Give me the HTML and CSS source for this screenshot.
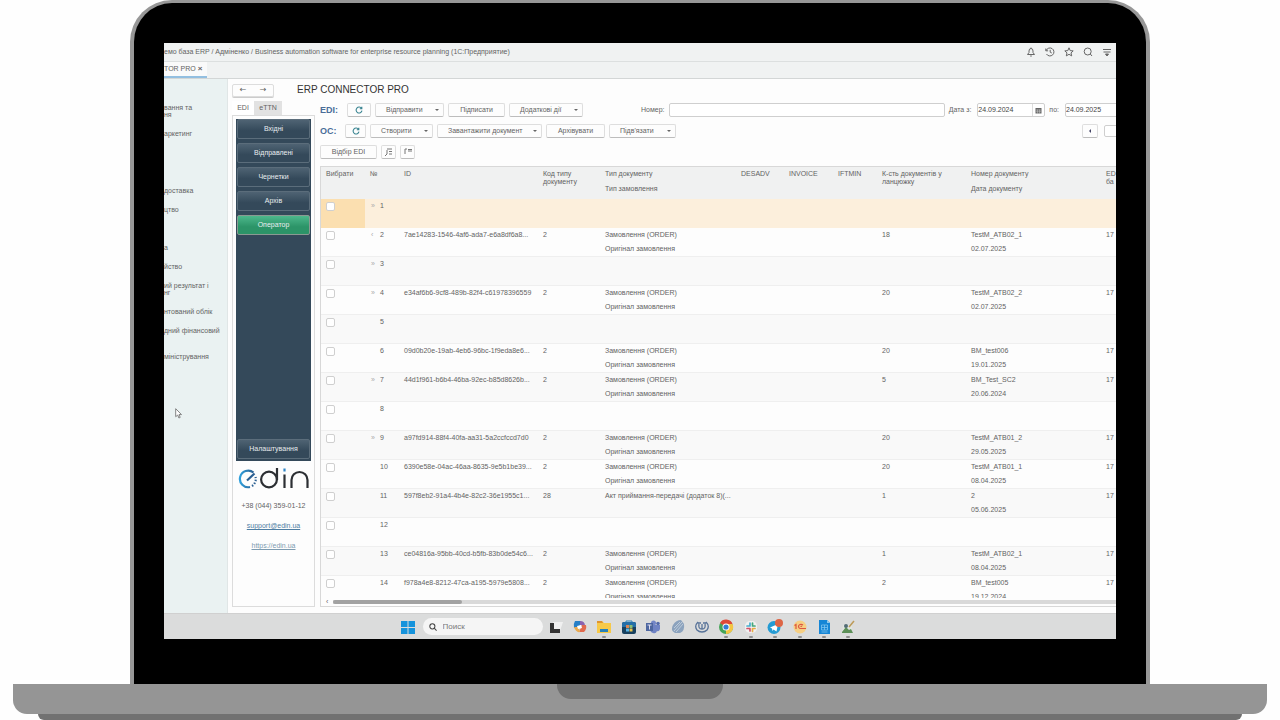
FILE: index.html
```
<!DOCTYPE html>
<html lang="uk">
<head>
<meta charset="utf-8">
<title>ERP CONNECTOR PRO</title>
<link rel="stylesheet" href="styles.css">
</head>
<body>
<div class="lid">
<div class="screen">
  <header class="titlebar">
    <span>емо база ERP / Адміненко / Business automation software for enterprise resource planning (1С:Предприятие)</span>
    <div class="title-icons">
      <button aria-label="Сповіщення"><svg viewBox="0 0 10 10"><path d="M1.500 7.500 3 5.500V4a2 2.500 0 0 1 4 0v1.500l1.500 2zM5 .6v1M4.200 9h1.600"/></svg></button>
      <button aria-label="Історія"><svg viewBox="0 0 10 10"><path d="M1.200 3.500A4 4 0 1 1 1.500 7M.8 1.500v2.300h2.300M5.200 2.800V5.200L6.800 6"/></svg></button>
      <button aria-label="Обране"><svg viewBox="0 0 10 10"><path d="m5 .8 1.200 2.800 3 .3L7 5.900l.7 3L5 7.300 2.300 8.900l.7-3L.8 3.900l3-.3z"/></svg></button>
      <button aria-label="Пошук"><svg viewBox="0 0 10 10"><circle cx="4.700" cy="4.500" r="3.500"/><path d="M7.300 7 9 9"/></svg></button>
      <button aria-label="Меню"><svg viewBox="0 0 10 10"><path d="M1 2.500h8M1.500 5h7"/><path d="M3.500 7h3L5 9z" fill="#666"/></svg></button>
    </div>
  </header>
  <div class="tabbar"><button class="doc-tab">TOR PRO <b>×</b></button></div>

  <div class="workspace">
    <nav class="sections">
      <ul>
        <li>вання та<br>ня</li><li>аркетинг</li><li></li><li></li><li>доставка</li><li>цтво</li><li></li><li>а</li><li>йство</li><li>ий результат і<br>нг</li><li>нтований облік</li><li class="two-line">дний фінансовий</li><li>міністрування</li>
      </ul>
      <svg class="pointer" viewBox="0 0 7 11"><path d="M.7.7v8l2-1.700 1.200 3 1.300-.6-1.200-2.800h2.500z" fill="#fff" stroke="#777" stroke-width=".9"/></svg>
    </nav>

    <main class="main">
      <div class="heading">
        <div class="history"><button aria-label="Назад">←</button><button aria-label="Вперед">→</button></div>
        <h1>ERP CONNECTOR PRO</h1>
      </div>
      <div class="columns">
        <aside class="side">
          <div class="side-tabs"><button class="on">EDI</button><button>eTTN</button></div>
          <div class="side-panel">
            <div class="menu">
              <button>Вхідні</button><button>Відправлені</button><button>Чернетки</button><button>Архів</button><button class="active">Оператор</button>
              <button class="last">Налаштування</button>
            </div>
            <svg class="logo" viewBox="0 0 72 24" role="img" aria-label="edin">
              <defs><linearGradient id="lg" x1="0" x2="1"><stop offset="0" stop-color="#2f9fdb"/><stop offset="1" stop-color="#2a5f92"/></linearGradient></defs>
              <g fill="none" stroke="#2c2f33" stroke-width="2.200">
                <path d="M15.500 6.500A8.300 8.300 0 1 0 12 21" stroke="url(#lg)"/>
                <path d="M9 14.500 16.500 7.500" stroke="#2a5f92"/>
                <path d="M14 20a8.300 8.300 0 0 0 3.500-9" stroke="#2a5f92" stroke-dasharray="1.500 1.500"/>
                <circle cx="31" cy="13.500" r="7.900"/><path d="M39 2v12M46.500 8.500V22M53.500 22v-8a8 8 0 0 1 16 0v8"/>
                <path d="M46.500 2.500v3" stroke="#2f86c8"/>
              </g>
            </svg>
            <p>+38 (044) 359-01-12</p>
            <p><a href="#mail">support@edin.ua</a></p>
            <p><a class="pale" href="#site">https://edin.ua</a></p>
          </div>
        </aside>

        <section class="content">
          <div class="bar">
            <strong class="w-tag">EDI:</strong>
            <button class="btn w-sm" aria-label="Оновити EDI"><svg class="ref" viewBox="0 0 10 10"><path d="M8.200 3A3.700 3.700 0 1 0 8.700 5.800M8.500 1v2.500H6"/></svg></button>
            <button class="btn drop w-69">Відправити</button>
            <button class="btn w-56">Підписати</button>
            <button class="btn drop w-74">Додаткові дії</button>
            <label class="number" for="num">Номер:</label><input id="num" class="grow" type="text">
            <label class="range" for="from">Дата з:</label>
            <span class="date"><input id="from" type="text" value="24.09.2024"><button aria-label="Календар"><svg viewBox="0 0 7 7"><path d="M.5 1h6v5.500h-6z" fill="#666"/><path d="M1 3h5M1 4.700h5M2.500 2.500v4M4.500 2.500v4" stroke="#ddd" stroke-width=".4"/></svg></button></span>
            <label class="range" for="to">по:</label>
            <span class="date cut"><input id="to" type="text" value="24.09.2025"></span>
          </div>
          <div class="bar">
            <strong class="w-tag2">ОС:</strong>
            <button class="btn w-20" aria-label="Оновити ОС"><svg class="ref" viewBox="0 0 10 10"><path d="M8.200 3A3.700 3.700 0 1 0 8.700 5.800M8.500 1v2.500H6"/></svg></button>
            <button class="btn drop w-63">Створити</button>
            <button class="btn drop w-105">Завантажити документ</button>
            <button class="btn w-59">Архівувати</button>
            <button class="btn drop w-67">Підв'язати</button>
            <button class="btn page-btn" aria-label="Попередня"><i></i></button>
            <input class="tail" type="text" aria-label="Сторінка">
          </div>
          <div class="bar">
            <button class="btn w-57">Відбір EDI</button>
            <button class="btn w-14" aria-label="Розгорнути"><svg viewBox="0 0 10 10"><path d="M3 2h5M5 4.500h3M5 7h3M1 9l2-2V3" /></svg></button>
            <button class="btn w-14" aria-label="Згорнути"><svg viewBox="0 0 10 10"><path d="M2 7V2h2M5 2.500h4M5 4h4" /></svg></button>
          </div>

          <div class="grid">
            <div class="rows">
              <table>
                <colgroup><col class="c1"><col class="c2"><col class="c3"><col class="c4"><col class="c5"><col class="c6"><col class="c7"><col class="c8"><col class="c9"><col class="c10"><col></colgroup>
                <thead><tr><th>Вибрати</th><th>№</th><th>ID</th><th>Код типу<br>документу</th><th>Тип документу<span>Тип замовлення</span></th><th>DESADV</th><th>INVOICE</th><th>IFTMIN</th><th>К-сть документів у<br>ланцюжку</th><th>Номер документу<span>Дата документу</span></th><th>ED<br>ба</th></tr></thead>
                <tbody id="rows"></tbody>
              </table>
            </div>
            <div class="scroll"><span>‹</span><div class="track"><div class="thumb"></div></div></div>
          </div>
        </section>
      </div>
    </main>
  </div>

  <footer class="taskbar">
    <button aria-label="Пуск"><svg viewBox="0 0 16 16"><path d="M1 2h6.500v6H1zM8.500 2H15v6H8.500zM1 9h6.500v6H1zM8.500 9H15v6H8.500z" fill="#1593dc"/></svg></button>
    <label class="search"><svg viewBox="0 0 10 10"><circle cx="4.200" cy="4.200" r="3.200"/><path d="m6.500 6.500 3 3"/></svg><input type="text" placeholder="Поиск" aria-label="Поиск"></label>
    <div class="apps">
    <button aria-label="Вікна"><svg viewBox="0 0 16 16"><path d="M5 3h10l-3 9H5z" fill="#f0f0f0"/><path d="M2 4h4v6h6v4H2z" fill="#333"/></svg></button>
    <button aria-label="Copilot"><svg viewBox="0 0 16 16"><path d="M3 2h6l-2 7H2Q1 5 3 2z" fill="#267fc7"/><path d="M8 2q5 0 5 5L8 6z" fill="#8a63b0"/><path d="M10 6h4q1 4-2 7H7z" fill="#e16a4e"/><path d="M2 8h5l1 5q-4 1-6-5z" fill="#e9a94e"/><path d="m5 7 4-1 1 3-4 1z" fill="#fff"/></svg></button>
    <button class="run" aria-label="Провідник"><svg viewBox="0 0 16 16"><path d="M1 2h5l2 2h7v10H1z" fill="#f7c948"/><path d="M1 2h5l1 2H1z" fill="#df932d"/><path d="M4 10h8v3H4z" fill="#2681b9"/></svg></button>
    <button aria-label="Магазин"><svg viewBox="0 0 16 16"><path d="M5 4V2h6v2" fill="none" stroke="#2b82b9"/><rect x="1" y="3" width="14" height="12" rx="2" fill="#17405f"/><path d="M1 5q0-2 2-2h10q2 0 2 2v3H1z" fill="#246fa8"/><path d="M5 6h3v3H5z" fill="#d98555"/><path d="M8.500 6h3v3h-3z" fill="#8abf74"/><path d="M5 9.500h3v3H5z" fill="#57b5e8"/><path d="M8.500 9.500h3v3h-3z" fill="#edc54d"/></svg></button>
    <button aria-label="Teams"><svg viewBox="0 0 16 16"><circle cx="8.500" cy="4" r="2.500" fill="#7386c7"/><circle cx="13" cy="4.500" r="1.800" fill="#536aab"/><path d="M5 6h10v4q-1 3-3 2-1 3-4 2-3-1-3-4z" fill="#6f83c4"/><path d="M1 4h7v8H1z" fill="#4d66a0"/><path d="M2.500 6h4M4.500 6v4.500" stroke="#dde"/></svg></button>
    <button aria-label="Блокнот"><svg viewBox="0 0 16 16"><path d="M3 6q3-5 8-5l3 4q1 7-4 9H5Q0 11 3 6z" fill="#8ba2bd"/><path d="m4 9 6-6M4 12l8-9M6 13l7-8" stroke="#bfccda"/></svg></button>
    <button aria-label="Мережа"><svg viewBox="0 0 16 16" fill="none" stroke="#587399" stroke-width="1.300"><path d="M4 3Q0 7 3 11q2 2 5 2M12 3q4 4 1 8-2 2-5 2"/><path d="M5 5q-1 5 3 5 4 0 3-5M8 5v5M4 4h3M9 4h3"/></svg></button>
    <button class="run" aria-label="Chrome"><svg viewBox="0 0 16 16"><circle cx="8" cy="8" r="7" fill="#45a458"/><path d="M8 8 2 4a7 7 0 0 1 12.500 1z" fill="#df4938"/><path d="M8 8V5h6.500A7 7 0 0 1 8 15z" fill="#f4c643"/><circle cx="8" cy="8" r="3.500" fill="#fff"/><circle cx="8" cy="8" r="2.600" fill="#347dd4"/></svg></button>
    <button class="run" aria-label="Slack"><svg viewBox="0 0 16 16"><rect x="2" y="2" width="12" height="12" rx="5" fill="#f0f0f0"/><g stroke-width="1.700" stroke-linecap="round"><path d="M7 4v3M4 7h2" stroke="#46afd0"/><path d="M9.500 4v2M9.500 7H12" stroke="#43a77b"/><path d="M9.500 9.500v3M10.500 9.500H12" stroke="#e5aa45"/><path d="M4 9.500h3M7 10.500V12" stroke="#d15068"/></g></svg></button>
    <button class="run" aria-label="Telegram"><svg viewBox="0 0 16 16"><circle cx="7" cy="8.500" r="6.500" fill="#249bd3"/><path d="m3 8.500 8-3.500-1.500 7.500-3-2-1 1.500-.5-2.500z" fill="#fff"/><circle cx="12" cy="4" r="4" fill="#dd6545"/></svg></button>
    <button class="run" aria-label="1С"><svg viewBox="0 0 16 16"><circle cx="8" cy="8" r="6.500" fill="#f6cf83"/><path d="m2.500 6.500 1.500-1V10M11 6Q9.500 5 8 5.500 6.500 6 6.500 7.500t1.500 2h6M10 7.500Q9 7 8.500 7.500" fill="none" stroke="#dc5541" stroke-width="1.200"/></svg></button>
    <button class="run" aria-label="Документ"><svg viewBox="0 0 16 16"><path d="M3 1h8l3 3v11H3z" fill="#1686d6"/><path d="M11 1v3h3z" fill="#8cc9ee"/><path d="M5.500 6h6v5h-6zM5.500 13h6M8.500 6v5M5.500 8.500h6" fill="none" stroke="#7ec4ef" stroke-width=".8"/></svg></button>
    <button class="run" aria-label="Фото"><svg viewBox="0 0 16 16"><path d="M3 6h9v8H2z" fill="#e1e5df"/><path d="m2 13 4-5 3 3 2-1 2 4H2z" fill="#5c8f57"/><circle cx="6" cy="7" r="2" fill="#536d77"/><path d="m9 8 5-6" stroke="#bd9b58" stroke-width="1.500"/></svg></button>
    </div>
  </footer>
</div>
</div>
<div class="base"><div class="notch"></div></div>
<div class="foot"></div>
<script src="rows.js"></script>
</body>
</html>
```

FILE: styles.css
```
* { box-sizing: border-box; }
body {
  margin: 0;
  height: 100vh;
  display: flex;
  flex-direction: column;
  overflow: hidden;
  background: #fefefe;
  color: #636363;
  font: 7px/8px "Liberation Sans", Arial, sans-serif;
}
button, input { font: inherit; color: inherit; margin: 0; padding: 0; border: 0; background: none; }
button { cursor: pointer; }
h1, p, ul { margin: 0; padding: 0; }

/* Laptop */
.lid {
  flex: 1;
  min-height: 0;
  display: flex;
  margin: 0 130px;
  padding: 40px 30px 45px;
  background: #000;
  border: 4px solid #979797;
  border-top-width: 3px;
  border-bottom: 0;
  border-radius: 42px 42px 0 0;
}
.base {
  height: 30px;
  margin: 0 13px;
  background: #959595;
  border-radius: 0 0 14px 14px;
}
.notch {
  width: 166px;
  height: 15px;
  margin: 0 auto;
  background: #717171;
  border-radius: 0 0 14px 14px;
}
.foot { height: 6px; margin: 0 38px; background: #717171; border-radius: 0 0 6px 6px; }
.screen {
  flex: 1;
  min-width: 0;
  display: flex;
  flex-direction: column;
  overflow: hidden;
  background: #fdfdfd;
}

/* Window chrome */
.titlebar {
  height: 18px;
  display: flex;
  align-items: center;
  justify-content: space-between;
  padding-right: 3px;
  background: #f0f2f2;
  white-space: nowrap;
}
.title-icons { display: flex; gap: 7px; }
.title-icons button { width: 12px; height: 12px; display: grid; place-items: center; }
.title-icons svg { width: 10px; height: 10px; fill: none; stroke: #666; stroke-width: 1; }
.tabbar {
  height: 18px;
  background: #f0f2f2;
  border-top: 1px solid #dcdfdf;
  border-bottom: 1px solid #d3d6d6;
}
.doc-tab { width: 43px; height: 16px; text-align: left; background: #fafafa; border-bottom: 2px solid #93bfe0; white-space: nowrap; }
.doc-tab b { font-size: 8px; }
.workspace { flex: 1; min-height: 0; display: flex; }
.sections { position: relative; width: 64px; padding-top: 25px; background: #eaf2f2; border-right: 1px solid #e0e6e6; overflow: hidden; }
.sections ul { display: grid; gap: 12px; list-style: none; line-height: 7px; white-space: nowrap; }
.sections li { min-height: 7px; }
.sections .two-line { min-height: 14px; }
.pointer { position: absolute; left: 11px; top: 329px; width: 7px; height: 11px; }
.main { flex: 1; min-width: 0; display: flex; flex-direction: column; padding: 4px 0 6px 4px; }
.heading { display: flex; align-items: center; gap: 23px; height: 14px; }
.history { display: flex; width: 42px; height: 13px; border: 1px solid #ddd; border-radius: 2px; box-shadow: 0 1px #ccc; }
.history button { flex: 1; font: 8px/10px "DejaVu Sans", sans-serif; }
h1 { font-size: 10px; line-height: 14px; font-weight: 400; color: #333; }
.columns { flex: 1; min-height: 0; display: flex; gap: 5px; }

/* Side panel */
.side { width: 83px; display: flex; flex-direction: column; padding-top: 4px; }
.side-tabs { display: flex; height: 14px; }
.side-tabs button { width: 28px; background: #e2e2e2; }
.side-tabs .on { width: 22px; background: #fff; }
.side-panel { flex: 1; border: 1px solid #dcdcdc; padding: 3px; text-align: center; }
.menu { height: 342px; display: flex; flex-direction: column; gap: 4px; padding: 0 1px 2px; background: #34495a; }
.menu button {
  height: 20px;
  color: #e9edf0;
  background: linear-gradient(#4f6373, #34495a 60%);
  border: 1px solid #5b6d7b;
  border-radius: 2px;
}
.menu .active { background: linear-gradient(#4db88c, #2c9468 60%); border-color: #8a9a92; }
.menu .last { margin-top: auto; }
.logo { display: block; width: 72px; height: 24px; margin: 5px auto 6px 2px; }
.side-panel p { height: 20px; line-height: 20px; white-space: nowrap; }
.side-panel a { color: #4f7ea3; }
.side-panel a.pale { color: #7d9bb0; }

/* Toolbars */
.content { flex: 1; min-width: 0; display: flex; flex-direction: column; padding-top: 6px; }
.bar { display: flex; align-items: center; gap: 4px; height: 14px; margin-bottom: 7px; white-space: nowrap; }
.bar strong { font-size: 9px; color: #4a6d99; }
.btn {
  flex: none;
  height: 14px;
  display: flex;
  align-items: center;
  justify-content: center;
  background: #fdfdfd;
  border: 1px solid #dedede;
  border-bottom-color: #bdbdbd;
  border-radius: 2px;
}
.btn svg { width: 10px; height: 10px; fill: none; stroke: #777; stroke-width: 1; }
.btn .ref { width: 8px; height: 8px; stroke: #3b8592; stroke-width: 1.400; }
.drop { justify-content: space-between; padding: 0 4px 0 10px; }
.drop::after { content: ""; border: 2px solid transparent; border-top: 2px solid #666; border-bottom: 0; }
.w-tag { width: 23px; }
.w-tag2 { width: 21px; }
.w-sm { width: 24px; }
.w-14 { width: 15px; }
.w-20 { width: 21px; }
.w-56, .w-57 { width: 57px; }
.w-59 { width: 59px; }
.w-63 { width: 63px; }
.w-67 { width: 67px; }
.w-69 { width: 69px; }
.w-74 { width: 74px; }
.w-105 { width: 105px; }
.number { margin-left: 54px; }
.range { margin-right: 2px; }
.grow { flex: 1; min-width: 20px; }
.grow, .date, .tail { height: 14px; border: 1px solid #cfcfcf; border-radius: 2px; background: #fff; }
.date { flex: none; width: 68px; display: flex; }
.date input { flex: 1; min-width: 0; color: #444; }
.date button { width: 12px; display: grid; place-items: center; border-left: 1px solid #ddd; }
.date svg { width: 7px; height: 7px; }
.cut { margin-right: -17px; }
.page-btn { width: 16px; margin-left: auto; }
.page-btn i { border: 2px solid transparent; border-right-color: #446; border-left: 0; }
.tail { width: 24px; height: 12px; margin: 0 -12px 0 2px; }

/* Document table */
.grid { flex: 1; min-height: 0; display: flex; flex-direction: column; border: 1px solid #d8d8d8; border-right: 0; }
.rows { flex: 1; min-height: 0; overflow: hidden; }
table { width: 100%; table-layout: fixed; border-collapse: separate; border-spacing: 0; }
.c1 { width: 44px; }
.c2 { width: 36px; }
.c3 { width: 139px; }
.c4 { width: 62px; }
.c5 { width: 136px; }
.c6 { width: 48px; }
.c7 { width: 49px; }
.c8 { width: 44px; }
.c9 { width: 89px; }
.c10 { width: 135px; }
th, td { padding: 0 0 0 3px; text-align: left; vertical-align: top; white-space: nowrap; overflow: hidden; font-weight: 400; }
th { height: 32px; padding-top: 3px; background: #f0f1f1; }
th:first-child, td:first-child { padding-left: 5px; }
th:nth-child(2) { padding-left: 5px; }
th span { display: block; margin-top: 7px; }
td { height: 29px; line-height: 14px; border-bottom: 1px solid #efefef; }
tbody tr:nth-child(odd) td { background: #f9f9f9; }
tbody tr:first-child td { background: #fcefdc; border-color: #fcefdc; }
tbody tr:first-child td:first-child { background: #fbdfb0; border-color: #fbdfb0; }
td input { appearance: none; display: block; width: 9px; height: 9px; margin-top: 3px; background: #fff; border: 1px solid #cfcfcf; border-radius: 2px; }
.mark { display: inline-block; width: 9px; padding-left: 3px; margin-right: 3px; color: #aaa; }
.scroll { display: flex; align-items: center; height: 8px; gap: 5px; padding-left: 5px; }
.scroll span { width: 2px; }
.track { flex: 1; height: 4px; background: #d9d9d9; }
.thumb { width: 129px; height: 4px; background: #a2a2a2; border-radius: 2px; }

/* Taskbar */
.taskbar {
  height: 26px;
  display: flex;
  align-items: center;
  justify-content: center;
  gap: 7px;
  padding-right: 24px;
  background: #dbdcdc;
  border-top: 1px solid #d0d0d0;
}
.apps { display: flex; justify-content: space-between; width: 309px; margin-right: 0; margin-left: -2px; }
.taskbar button { position: relative; flex: none; width: 16px; height: 16px; }
.taskbar button svg { display: block; width: 16px; height: 16px; }
.taskbar .run::after { content: ""; position: absolute; left: 6px; bottom: -3px; width: 4px; height: 2px; border-radius: 1px; background: #8f8f8f; }
.search { display: flex; align-items: center; gap: 6px; width: 120px; height: 17px; padding-left: 6px; background: #f5f5f5; border-radius: 9px; font-size: 8px; }
.search svg { flex: none; width: 8px; height: 8px; fill: none; stroke: #444; stroke-width: 1.300; }
.search input { flex: 1; min-width: 0; }
.search input::placeholder { color: #777; }
```

FILE: rows.js
```
const order = ["Замовлення (ORDER)", "Оригінал замовлення"];
const data = [
  ["»"],
  ["‹", "7ae14283-1546-4af6-ada7-e6a8df6a8...", "2", order, "18", ["TestM_ATB02_1", "02.07.2025"]],
  ["»"],
  ["»", "e34af6b6-9cf8-489b-82f4-c61978396559", "2", order, "20", ["TestM_ATB02_2", "02.07.2025"]],
  [""],
  ["", "09d0b20e-19ab-4eb6-96bc-1f9eda8e6...", "2", order, "20", ["BM_test006", "19.01.2025"]],
  ["»", "44d1f961-b6b4-46ba-92ec-b85d8626b...", "2", order, "5", ["BM_Test_SC2", "20.06.2024"]],
  [""],
  ["»", "a97fd914-88f4-40fa-aa31-5a2ccfccd7d0", "2", order, "20", ["TestM_ATB01_2", "29.05.2025"]],
  ["", "6390e58e-04ac-46aa-8635-9e5b1be39...", "2", order, "20", ["TestM_ATB01_1", "08.04.2025"]],
  ["", "597f8eb2-91a4-4b4e-82c2-36e1955c1...", "28", ["Акт приймання-передачі (додаток 8)(...", ""], "1", ["2", "05.06.2025"]],
  [""],
  ["", "ce04816a-95bb-40cd-b5fb-83b0de54c6...", "2", order, "1", ["TestM_ATB02_1", "08.04.2025"]],
  ["", "f978a4e8-8212-47ca-a195-5979e5808...", "2", order, "2", ["BM_test005", "19.12.2024"]]
];
document.getElementById("rows").innerHTML = data.map(([mark, id = "", code = "", type = [], count = "", doc = []], i) =>
  `<tr><td><input type="checkbox" aria-label="Вибрати ${i + 1}"></td><td><span class="mark">${mark}</span>${i + 1}</td>` +
  `<td>${id}</td><td>${code}</td><td>${type.join("<br>")}</td><td></td><td></td><td></td>` +
  `<td>${count}</td><td>${doc.join("<br>")}</td><td>${id ? "17" : ""}</td></tr>`
).join("");
```
